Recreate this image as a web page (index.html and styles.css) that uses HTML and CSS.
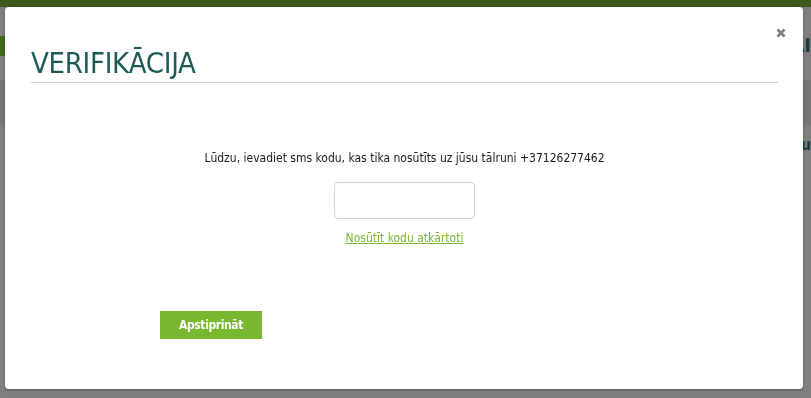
FILE: index.html
```html
<!DOCTYPE html>
<html lang="lv">
<head>
    <meta charset="UTF-8">
    <meta name="viewport" content="width=device-width, initial-scale=1.0">
    <title>Verifikācija</title>
    <link rel="stylesheet" href="styles.css">
</head>
<body>
    <!-- Lapa aiz modāļa -->
    <div class="page">
        <div class="page-topbar"></div>
        <div class="page-header">
            <span class="page-logo"></span>
            <span class="page-brand">AI</span>
        </div>
        <div class="page-band"></div>
        <div class="page-body">
            <span class="page-side-text">Šu</span>
        </div>
    </div>

    <!-- Modālis -->
    <div class="overlay">
        <div class="modal">
            <button class="modal-close" type="button" aria-label="Aizvērt">
                <svg width="10" height="10" viewBox="0 0 10 10">
                    <path d="M1.5 1.5 L8.5 8.5 M8.5 1.5 L1.5 8.5" stroke="#7d7d7d" stroke-width="2.6" stroke-linecap="butt"/>
                </svg>
            </button>
            <h2 class="modal-title">VERIFIKĀCIJA</h2>

            <div class="modal-content">
                <p class="sms-info">Lūdzu, ievadiet sms kodu, kas tika nosūtīts uz jūsu tālruni +37126277462</p>
                <input class="sms-input" type="text">
                <a class="resend-link" href="#">Nosūtīt kodu atkārtoti</a>
            </div>

            <div class="modal-actions">
                <button class="btn-confirm" type="button">Apstiprināt</button>
            </div>
        </div>
    </div>
</body>
</html>
```

FILE: styles.css
```css
* {
    margin: 0;
    padding: 0;
    box-sizing: border-box;
}

body {
    font-family: 'DejaVu Sans Condensed', 'DejaVu Sans', sans-serif;
    background: #7f7f7f;
    height: 100vh;
    overflow: hidden;
}

/* Lapa aiz overlay */
.page-topbar {
    height: 7px;
    background: #3d5a1a;
}

.page-header {
    height: 73px;
    display: flex;
    align-items: center;
    justify-content: space-between;
}

.page-logo {
    width: 5px;
    height: 20px;
    background: #3f6a1c;
    margin-top: 4px;
}

.page-brand {
    color: #1f3d36;
    font-weight: bold;
    font-size: 20px;
    margin-top: 2px;
}

.page-band {
    height: 45px;
    background: #767676;
}

.page-body {
    display: flex;
    justify-content: flex-end;
    padding-top: 10px;
}

.page-side-text {
    color: #1f3d36;
    font-weight: bold;
    font-size: 16px;
}

/* Overlay + modālis */
.overlay {
    position: fixed;
    inset: 0;
    padding: 7px 8px 9px 5px;
}

.modal {
    position: relative;
    height: 100%;
    background: #fff;
    border-radius: 4px;
    box-shadow: 0 1px 3px rgba(0, 0, 0, 0.3);
    padding: 38px 25px 0 26px;
    display: flex;
    flex-direction: column;
}

.modal-close {
    position: absolute;
    top: 21px;
    right: 17px;
    border: 0;
    background: none;
    cursor: pointer;
    line-height: 0;
}

.modal-title {
    font-weight: normal;
    font-size: 29px;
    line-height: 36px;
    color: #1e5a55;
    letter-spacing: -0.3px;
    padding-bottom: 1px;
    border-bottom: 1px solid #cccccc;
}

.modal-content {
    display: flex;
    flex-direction: column;
    align-items: center;
    padding-top: 67px;
}

.sms-info {
    font-size: 12px;
    line-height: 16px;
    color: #1a1a1a;
}

.sms-input {
    width: 141px;
    height: 37px;
    margin-top: 16px;
    border: 1px solid #cfd3d8;
    border-radius: 4px;
    outline: none;
}

.resend-link {
    margin-top: 11px;
    font-size: 12px;
    line-height: 16px;
    color: #77b82e;
    text-decoration: underline;
}

.modal-actions {
    padding: 65px 0 0 129px;
}

.btn-confirm {
    width: 102px;
    height: 28px;
    border: 0;
    background: #77b82f;
    color: #fff;
    font-family: inherit;
    font-weight: bold;
    font-size: 12px;
    letter-spacing: -0.4px;
    cursor: pointer;
}
```
